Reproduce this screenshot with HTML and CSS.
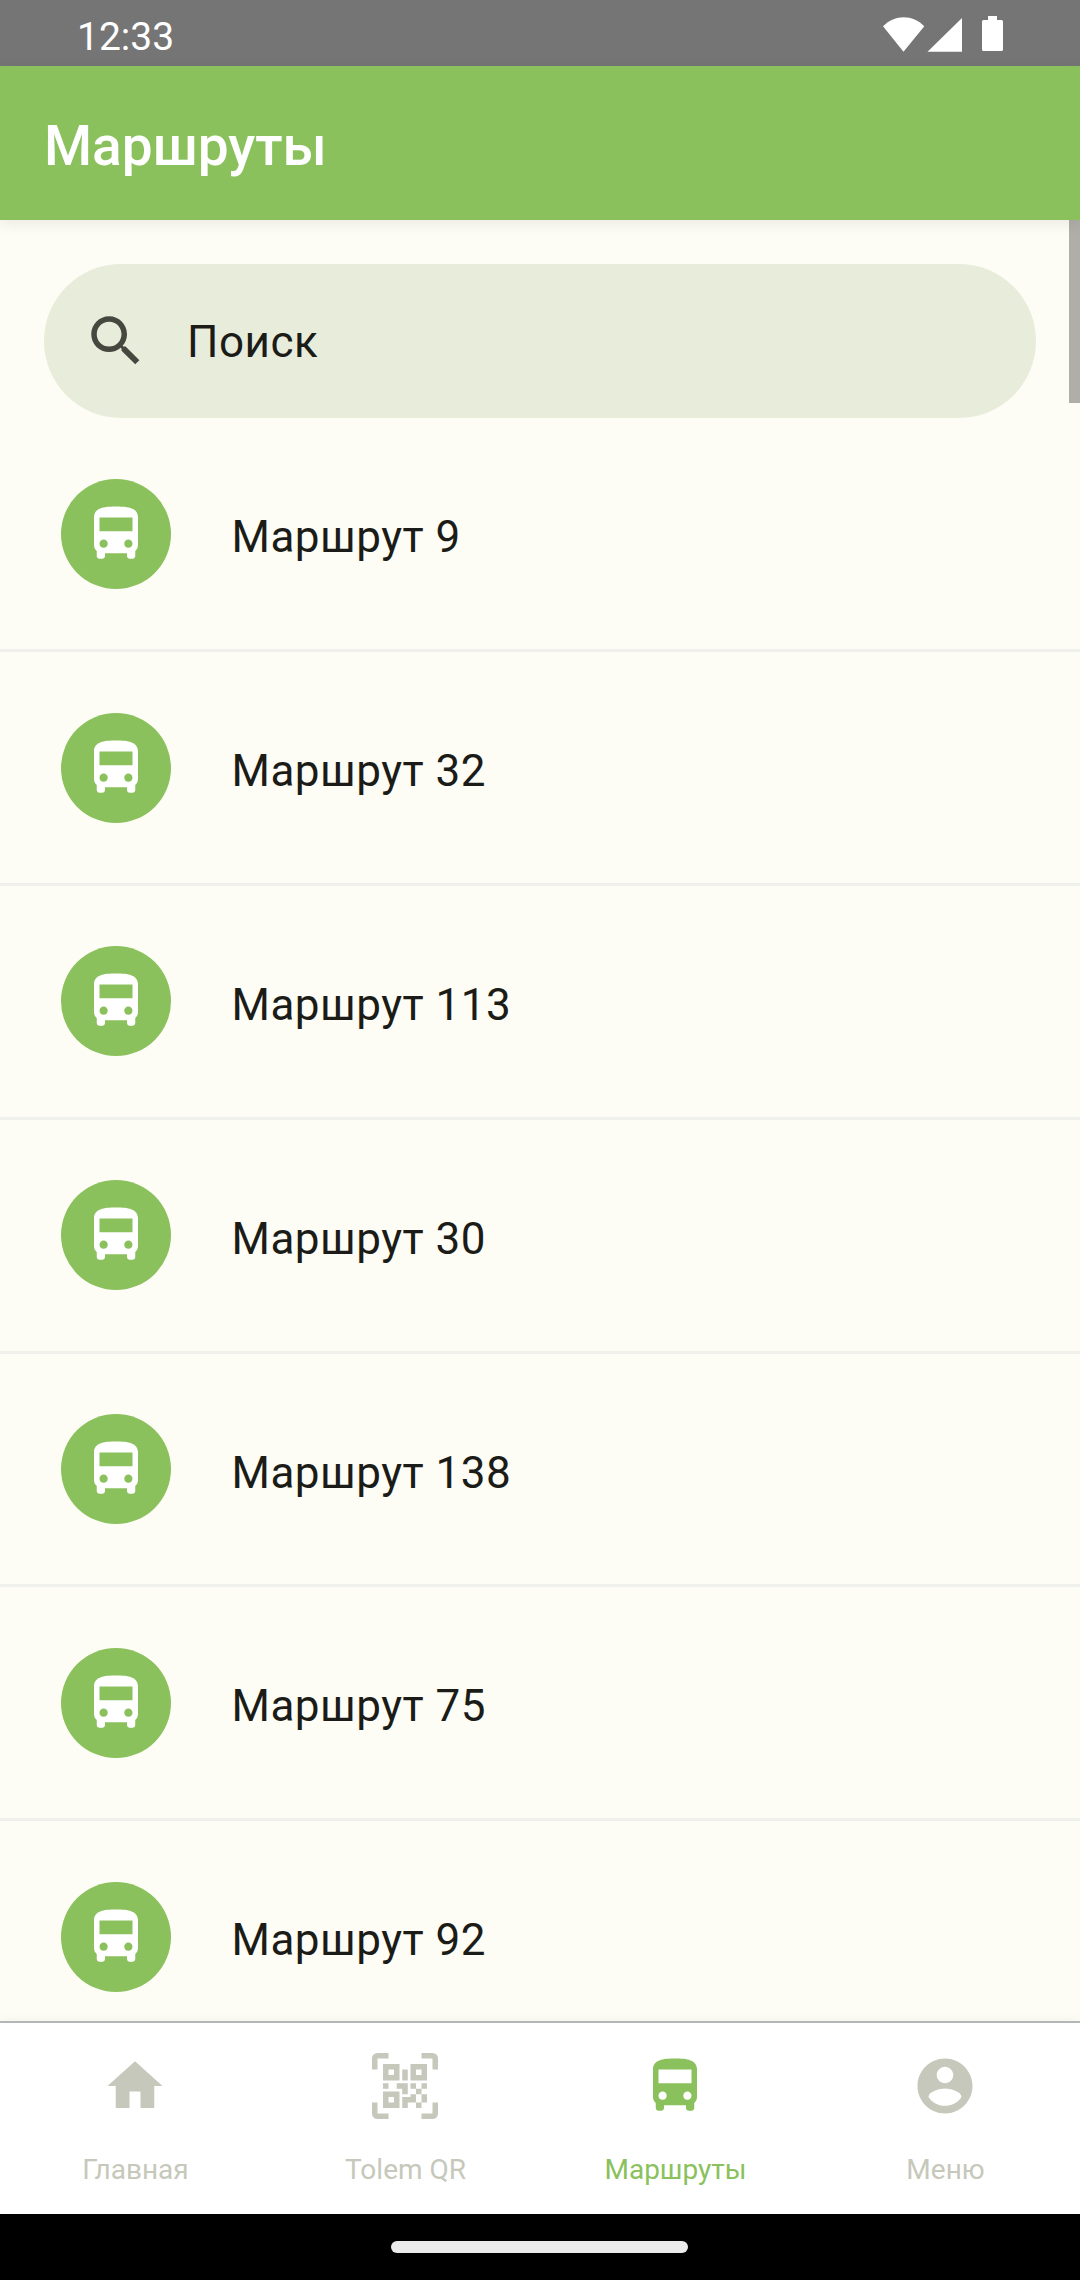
FILE: index.html
```html
<!DOCTYPE html>
<html lang="ru">

<head>
    <meta charset="UTF-8">
    <meta name="viewport" content="width=device-width, initial-scale=1.0">
    <title>Маршруты</title>
    <link rel="stylesheet" href="styles.css">
</head>

<body>

    <!-- Общие иконки -->
    <svg class="sprite">
        <symbol id="bus" viewBox="0 0 24 24">
            <path d="M4 16c0 .88.39 1.67 1 2.22V20c0 .55.45 1 1 1h1c.55 0 1-.45 1-1v-1h8v1c0 .55.45 1 1 1h1c.55 0 1-.45 1-1v-1.78c.61-.55 1-1.34 1-2.22V6c0-3.5-3.58-4-8-4s-8 .5-8 4v10zm3.5 1c-.83 0-1.5-.67-1.5-1.5S6.67 14 7.5 14s1.5.67 1.5 1.5S8.33 17 7.5 17zm9 0c-.83 0-1.5-.67-1.5-1.5s.67-1.5 1.5-1.5 1.5.67 1.5 1.5-.67 1.5-1.5 1.5zm1.5-6H6V6h12v5z"/>
        </symbol>
    </svg>

    <!-- Строка состояния -->
    <div class="status-bar">
        <span class="time">12:33</span>
        <svg class="status-icons" width="122" height="36" viewBox="0 0 122 36">
            <path d="M0 10.3C12 -1.8 29.5 -1.8 41.3 10.3L20.5 35.7z"/>
            <path d="M79 2v33.700H44.500z"/>
            <path d="M105 0h9v4h4.500q1.500 0 1.500 1.500v28q0 1.500-1.500 1.500h-18q-1.500 0-1.500-1.500v-28q0-1.500 1.500-1.500h4.500z"/>
        </svg>
    </div>

    <header class="toolbar">
        <h1>Маршруты</h1>
    </header>

    <!-- Список маршрутов -->
    <main class="content">
        <div class="search">
            <svg class="icon" viewBox="0 0 24 24">
                <path d="M15.5 14h-.79l-.28-.27C15.41 12.590 16 11.110 16 9.500 16 5.910 13.090 3 9.500 3S3 5.910 3 9.500 5.910 16 9.500 16c1.610 0 3.090-.59 4.230-1.570l.27.28v.79l5 4.990L20.490 19l-4.990-5zm-6 0C7.010 14 5 11.990 5 9.500S7.010 5 9.500 5 14 7.010 14 9.500 11.990 14 9.500 14z"/>
            </svg>
            <span>Поиск</span>
        </div>

        <div class="route">
            <div class="avatar"><svg class="icon"><use href="#bus"/></svg></div>
            <span>Маршрут 9</span>
        </div>
        <div class="route">
            <div class="avatar"><svg class="icon"><use href="#bus"/></svg></div>
            <span>Маршрут 32</span>
        </div>
        <div class="route">
            <div class="avatar"><svg class="icon"><use href="#bus"/></svg></div>
            <span>Маршрут 113</span>
        </div>
        <div class="route">
            <div class="avatar"><svg class="icon"><use href="#bus"/></svg></div>
            <span>Маршрут 30</span>
        </div>
        <div class="route">
            <div class="avatar"><svg class="icon"><use href="#bus"/></svg></div>
            <span>Маршрут 138</span>
        </div>
        <div class="route">
            <div class="avatar"><svg class="icon"><use href="#bus"/></svg></div>
            <span>Маршрут 75</span>
        </div>
        <div class="route">
            <div class="avatar"><svg class="icon"><use href="#bus"/></svg></div>
            <span>Маршрут 92</span>
        </div>

        <div class="scrollbar"></div>
    </main>

    <!-- Нижняя навигация -->
    <nav class="tabs">
        <div class="tab">
            <svg class="icon" viewBox="0 0 24 24">
                <path d="M10 20v-6h4v6h5v-8h3L12 3 2 12h3v8z"/>
            </svg>
            <span>Главная</span>
        </div>
        <div class="tab">
            <svg class="icon" viewBox="0 0 24 24">
                <path d="M4,4H10V10H4V4M20,4V10H14V4H20M14,15H16V13H14V11H16V13H18V11H20V13H18V15H20V18H18V20H16V18H13V20H11V16H14V15M16,15V18H18V15H16M4,20V14H10V20H4M6,6V8H8V6H6M16,6V8H18V6H16M6,16V18H8V16H6M4,11H6V13H4V11M9,11H13V15H11V13H9V11M11,6H13V10H11V6M2,2V6H0V2A2,2 0 0,1 2,0H6V2H2M22,0A2,2 0 0,1 24,2V6H22V2H18V0H22M2,18V22H6V24H2A2,2 0 0,1 0,22V18H2M22,22V18H24V22A2,2 0 0,1 22,24H18V22H22Z"/>
            </svg>
            <span>Tolem QR</span>
        </div>
        <div class="tab active">
            <svg class="icon"><use href="#bus"/></svg>
            <span>Маршруты</span>
        </div>
        <div class="tab">
            <svg class="icon" viewBox="0 0 24 24">
                <path d="M12 2C6.480 2 2 6.480 2 12s4.480 10 10 10 10-4.480 10-10S17.520 2 12 2zm0 3c1.660 0 3 1.340 3 3s-1.340 3-3 3-3-1.340-3-3 1.340-3 3-3zm0 14.200c-2.500 0-4.710-1.280-6-3.220.03-1.990 4-3.080 6-3.080 1.990 0 5.970 1.090 6 3.080-1.290 1.940-3.500 3.220-6 3.220z"/>
            </svg>
            <span>Меню</span>
        </div>
    </nav>

    <div class="gesture-bar">
        <div class="pill"></div>
    </div>

</body>

</html>
```

FILE: styles.css
```css
* {
    box-sizing: border-box;
}

body {
    margin: 0;
    height: 2280px;
    display: flex;
    flex-direction: column;
    font-family: Roboto, sans-serif;
    color: #1b1c18;
    background-color: #fefdf5;
    overflow: hidden;
}

.sprite {
    display: none;
}

.icon {
    display: block;
    flex-shrink: 0;
    width: 66px;
    height: 66px;
    fill: currentColor;
}

.status-bar {
    flex: none;
    height: 66px;
    padding: 16px 75px 0 77px;
    display: flex;
    justify-content: space-between;
    background-color: #757575;
    color: #fff;
}

.time {
    font-size: 39px;
    line-height: 42px;
}

.status-icons {
    fill: #fff;
}

.toolbar {
    flex: none;
    height: 154px;
    padding: 0 44px;
    display: flex;
    align-items: center;
    background-color: #8ac15c;
    color: #fff;
    box-shadow: 0 4px 14px rgba(0, 0, 0, 0.08);
    z-index: 1;
}

.toolbar h1 {
    margin: 6px 0 0;
    font-size: 55px;
    font-weight: 500;
    line-height: 64px;
}

.content {
    position: relative;
    flex: 1;
    min-height: 0;
    padding-top: 44px;
    overflow: hidden;
}

.search {
    height: 154px;
    margin: 0 44px 0.5px;
    padding-left: 39px;
    display: flex;
    align-items: center;
    gap: 38px;
    border-radius: 77px;
    background-color: #e8ecdb;
    font-size: 44px;
    letter-spacing: 0.5px;
}

.search .icon {
    color: #46483f;
}

.search span {
    padding-top: 2px;
}

.route {
    height: 233.8px;
    padding: 0 61px;
    display: flex;
    align-items: center;
    gap: 60.5px;
    border-bottom: 3px solid #f0f0ed;
    font-size: 44px;
    letter-spacing: 0.5px;
}

.route span {
    padding-top: 7px;
}

.avatar {
    width: 110px;
    height: 110px;
    display: flex;
    align-items: center;
    justify-content: center;
    border-radius: 50%;
    background-color: #8ac15c;
    color: #fff;
}

.scrollbar {
    position: absolute;
    top: 0;
    right: 0;
    width: 11px;
    height: 183px;
    background-color: #afaea9;
}

.tabs {
    flex: none;
    height: 193px;
    display: flex;
    border-top: 2px solid #b4b7b8;
    background-color: #fff;
    box-shadow: 0 0 12px rgba(0, 0, 0, 0.05);
    z-index: 1;
}

.tab {
    flex: 1;
    padding-top: 30px;
    display: flex;
    flex-direction: column;
    align-items: center;
    gap: 35px;
    color: #c5c8ba;
    font-size: 28px;
    line-height: 32px;
}

.tab span {
    padding-left: 1px;
}

.tab.active {
    color: #8ac15c;
}

.gesture-bar {
    flex: none;
    height: 66px;
    padding-right: 1px;
    display: flex;
    align-items: center;
    justify-content: center;
    background-color: #000;
    z-index: 1;
}

.pill {
    width: 297px;
    height: 12px;
    border-radius: 6px;
    background-color: #ebebeb;
}
```
